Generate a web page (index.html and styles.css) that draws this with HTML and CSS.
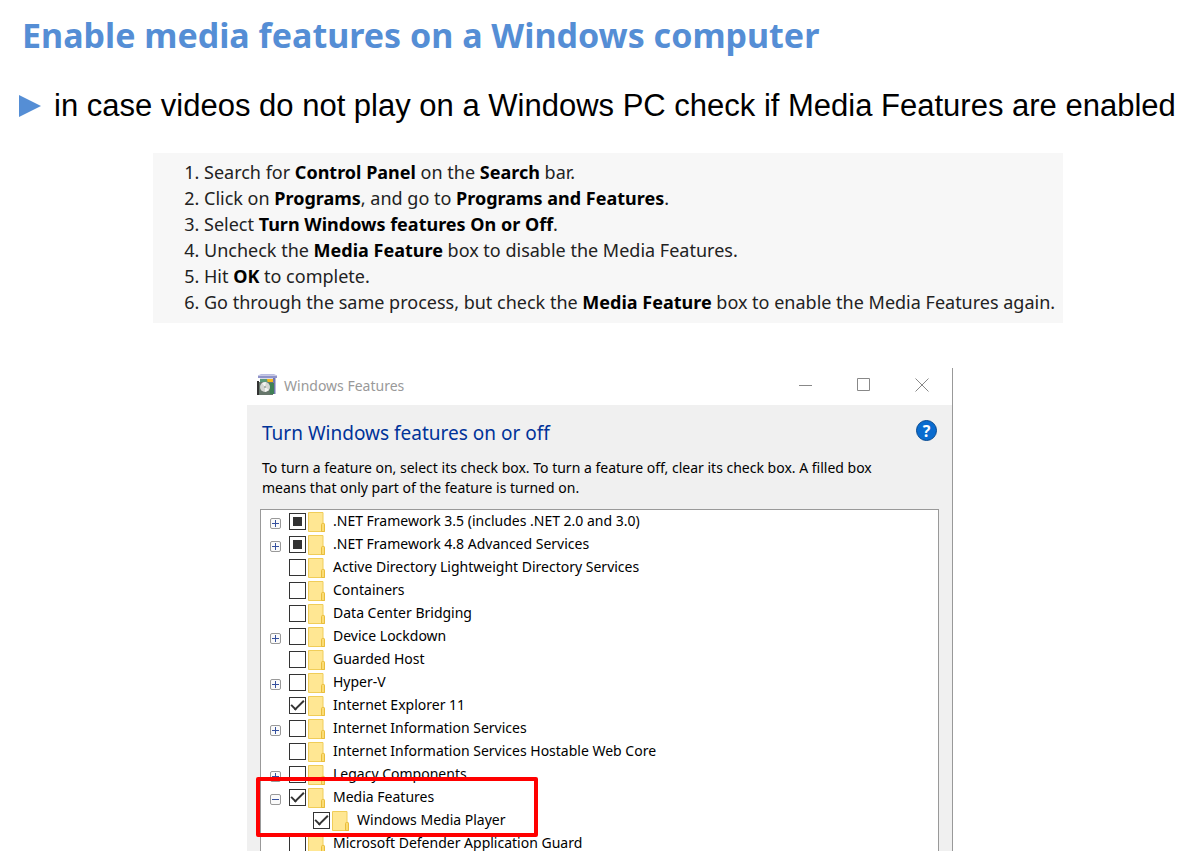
FILE: index.html
```html
<!DOCTYPE html>
<html lang="en">
<head>
<meta charset="utf-8">
<meta name="viewport" content="width=device-width, initial-scale=1">
<title>Enable media features on a Windows computer</title>
<link rel="stylesheet" href="styles.css">
</head>
<body>
<svg width="0" height="0" class="sprite" aria-hidden="true">
  <symbol id="folder" viewBox="0 0 17 20">
    <path d="M.5 .5H15V11L16.5 12V19.5H.5Z" fill="#ffe793" stroke="#f0cd58"/>
    <path d="M13.500 19.500V12.500Q13.500 11.500 14.500 11.500H15.500Q16.500 11.500 16.500 12.500V19.500Z" fill="#fbdc74" stroke="#e9bd3c"/>
  </symbol>
</svg>
<main class="slide">
  <h1 class="title">Enable media features on a Windows computer</h1>
  <p class="lead">
    <svg class="arrow" width="22" height="24" viewBox="0 0 22 24" aria-hidden="true"><path d="M0 1 22 12 0 23Z" fill="#558ed5"/></svg>
    <span>in case videos do not play on a Windows PC check if Media Features are enabled</span>
  </p>
  <div class="steps-row">
    <ol class="steps">
      <li>Search for <b>Control Panel</b> on the <b>Search</b> bar.</li>
      <li>Click on <b>Programs</b>, and go to <b>Programs and Features</b>.</li>
      <li>Select <b>Turn Windows features On or Off</b>.</li>
      <li>Uncheck the <b>Media Feature</b> box to disable the Media Features.</li>
      <li>Hit <b>OK</b> to complete.</li>
      <li>Go through the same process, but check the <b>Media Feature</b> box to enable the Media Features again.</li>
    </ol>
  </div>
  <section class="window" aria-label="Windows Features">
    <header class="titlebar">
      <svg class="app-icon" width="22" height="22" viewBox="0 0 22 22" aria-hidden="true">
        <path d="M4 3H19V20H4Z" fill="#d9dbe8"/>
        <path d="M2 1.500H21V4H2Z" fill="#8f93c9"/>
        <path d="M3 1 5 0H18L20 1Z" fill="#b9bce2"/>
        <path d="M17 4H19.500V20H17Z" fill="#7377b0"/>
        <path d="M4 5H16V11H4Z" fill="#5c9a78"/>
        <path d="M11 5H17V10H12Z" fill="#f6b81c"/>
        <path d="M1 7H3V21H1Z" fill="#333"/>
        <path d="M3 8H17V21H3Z" fill="#66766b"/>
        <path d="M13 9H18V20H14Z" fill="#3f8055"/>
        <circle cx="9" cy="13" r="5" fill="#d5d6d3"/>
        <path d="M9 13 6 9 10 8ZM9 13 13 16 9 18Z" fill="#f5f5f2"/>
        <circle cx="9" cy="13" r="1" fill="#9aa39c"/>
      </svg>
      <span class="window-name">Windows Features</span>
      <div class="controls">
        <button type="button" aria-label="Minimize"><svg width="14" height="14" viewBox="0 0 14 14"><path d="M0 7.500H13"/></svg></button>
        <button type="button" aria-label="Maximize"><svg width="14" height="14" viewBox="0 0 14 14"><path d="M.5 .5H12.500V12.500H.5Z"/></svg></button>
        <button type="button" aria-label="Close"><svg width="14" height="14" viewBox="0 0 14 14"><path d="M.5 .5 13.500 13.500M13.500 .5 .5 13.500"/></svg></button>
      </div>
    </header>
    <div class="content">
      <div class="heading">
        <h2>Turn Windows features on or off</h2>
        <button type="button" class="help" aria-label="Help">?</button>
      </div>
      <p class="hint">To turn a feature on, select its check box. To turn a feature off, clear its check box. A filled box means that only part of the feature is turned on.</p>
      <ul class="tree">
        <li class="row"><button type="button" class="toggle plus" aria-label="Expand"></button><label><input type="checkbox" class="partial"><svg class="folder"><use href="#folder"/></svg>.NET Framework 3.5 (includes .NET 2.0 and 3.0)</label></li>
        <li class="row"><button type="button" class="toggle plus" aria-label="Expand"></button><label><input type="checkbox" class="partial"><svg class="folder"><use href="#folder"/></svg>.NET Framework 4.8 Advanced Services</label></li>
        <li class="row"><label><input type="checkbox"><svg class="folder"><use href="#folder"/></svg>Active Directory Lightweight Directory Services</label></li>
        <li class="row"><label><input type="checkbox"><svg class="folder"><use href="#folder"/></svg>Containers</label></li>
        <li class="row"><label><input type="checkbox"><svg class="folder"><use href="#folder"/></svg>Data Center Bridging</label></li>
        <li class="row"><button type="button" class="toggle plus" aria-label="Expand"></button><label><input type="checkbox"><svg class="folder"><use href="#folder"/></svg>Device Lockdown</label></li>
        <li class="row"><label><input type="checkbox"><svg class="folder"><use href="#folder"/></svg>Guarded Host</label></li>
        <li class="row"><button type="button" class="toggle plus" aria-label="Expand"></button><label><input type="checkbox"><svg class="folder"><use href="#folder"/></svg>Hyper-V</label></li>
        <li class="row"><label><input type="checkbox" checked><svg class="folder"><use href="#folder"/></svg>Internet Explorer 11</label></li>
        <li class="row"><button type="button" class="toggle plus" aria-label="Expand"></button><label><input type="checkbox"><svg class="folder"><use href="#folder"/></svg>Internet Information Services</label></li>
        <li class="row"><label><input type="checkbox"><svg class="folder"><use href="#folder"/></svg>Internet Information Services Hostable Web Core</label></li>
        <li class="row"><button type="button" class="toggle plus" aria-label="Expand"></button><label><input type="checkbox"><svg class="folder"><use href="#folder"/></svg>Legacy Components</label></li>
        <li class="marked">
          <div class="row"><button type="button" class="toggle" aria-label="Collapse"></button><label><input type="checkbox" checked><svg class="folder"><use href="#folder"/></svg>Media Features</label></div>
          <ul class="children">
            <li class="row"><label><input type="checkbox" checked><svg class="folder"><use href="#folder"/></svg>Windows Media Player</label></li>
          </ul>
        </li>
        <li class="row"><label><input type="checkbox"><svg class="folder"><use href="#folder"/></svg>Microsoft Defender Application Guard</label></li>
      </ul>
    </div>
  </section>
</main>
</body>
</html>
```
FILE: styles.css
```css
*, *::before, *::after { box-sizing: border-box; }
body { margin: 0; background: #fff; color: #000; font-family: "Noto Sans", "Open Sans", sans-serif; }
h1, h2, p, ol, ul { margin: 0; padding: 0; }
ul { list-style: none; }
button { padding: 0; border: 0; background: none; font: inherit; }
.sprite { position: absolute; }

.slide { display: flex; flex-direction: column; height: 100vh; overflow: hidden; padding-left: 16px; }
.title { flex: none; padding: 11px 0 0 6px; color: #558ed5; font: bold 34px/48px "Noto Sans", sans-serif; white-space: nowrap; }
.lead { flex: none; display: flex; align-items: center; gap: 13px; padding: 27px 0 0 3px; font: 31px/40px "Liberation Sans", Arial, sans-serif; white-space: nowrap; }
.arrow { flex: none; }

.steps-row { flex: none; padding: 27px 0 0 16px; }
.steps { max-width: 910px; margin: 0 auto; padding: 6px 0 8px 51px; background: #f7f7f7; font-size: 18px; line-height: 26px; color: #222; white-space: nowrap; }
.steps b { color: #000; }

.window { flex: 1; min-height: 0; width: 100%; max-width: 706px; margin: 45px auto 0; border-right: 1px solid #999; }
.titlebar { display: flex; align-items: center; height: 37px; padding: 0 0 3px 9px; background: #fff; color: #999; }
.window-name { margin-left: 6px; font-size: 14px; }
.controls { display: flex; gap: 44px; margin-left: auto; padding-right: 23px; }
.controls button { display: flex; }
.controls svg { fill: none; stroke: #888; }

.content { padding: 14px 13px 0; background: #f0f0f0; }
.heading { display: flex; justify-content: space-between; align-items: flex-start; padding-left: 2px; }
.heading h2 { color: #003399; font-size: 19px; font-weight: normal; line-height: 28px; }
.help { width: 21px; height: 21px; margin: 1px 2px 0 0; border: 1px solid #084a91; border-radius: 50%; background: #0a6ccf; color: #fff; font-size: 16px; font-weight: bold; line-height: 18px; }
.hint { max-width: 650px; padding: 11px 0 11px 2px; font-size: 14px; line-height: 20px; }

.tree { border: 1px solid #999; background: #fff; font-size: 14px; line-height: 22px; }
.row { display: flex; align-items: flex-start; height: 23px; padding-left: 28px; }
.row label { display: flex; align-items: flex-start; white-space: nowrap; }
.toggle { position: relative; width: 11px; height: 11px; margin: 8px 8px 0 -19px; border: 1px solid #999; border-radius: 2px; background: #fafafa; }
.toggle::before { content: ""; position: absolute; left: 1px; top: 4px; width: 7px; height: 1px; background: #35509e; }
.plus::after { content: ""; position: absolute; left: 4px; top: 1px; width: 1px; height: 7px; background: #35509e; }
input { appearance: none; flex: none; width: 17px; height: 17px; margin: 3px 0 0; border: 1px solid #333; background: #fff; }
.partial { padding: 3px; background: #333 content-box; }
input:checked { display: grid; place-items: center; }
input:checked::before { content: ""; width: 13px; height: 7px; margin-top: -4px; border: solid #333; border-width: 0 0 2px 2px; transform: rotate(-45deg); }
.folder { flex: none; width: 17px; height: 20px; margin: 2px 8px 0 2px; }
.children { padding-left: 24px; }
.marked { position: relative; }
.marked::after { content: ""; position: absolute; left: -5px; top: -9px; width: 282px; height: 60px; border: 4px solid #f00; border-radius: 2px; pointer-events: none; }
```
